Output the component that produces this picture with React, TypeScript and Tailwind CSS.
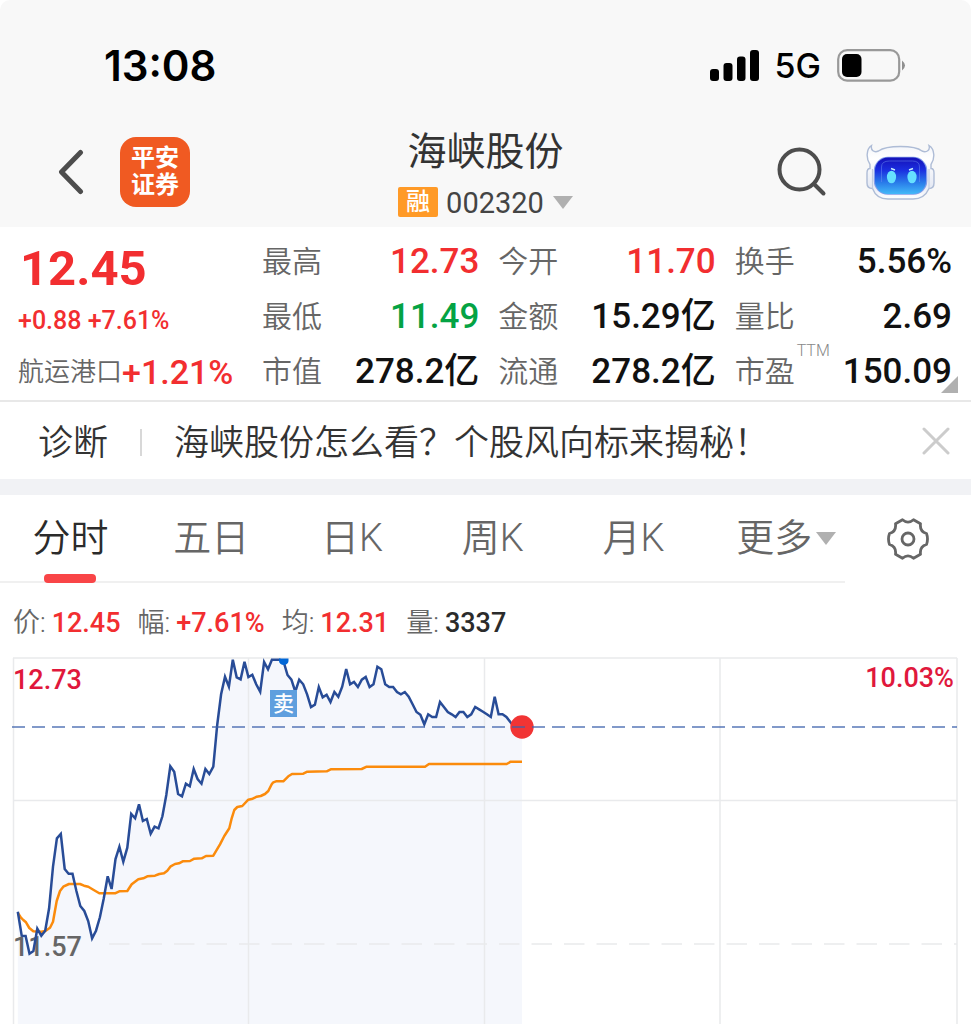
import React from 'react';

type Stat = {
  label: string;
  value: string;
  color: string;
  note?: string;
};

const stats: Stat[] = [
  { label: '最高', value: '12.73', color: 'text-[#f22e30]' },
  { label: '今开', value: '11.70', color: 'text-[#f22e30]' },
  { label: '换手', value: '5.56%', color: 'text-[#111111]' },
  { label: '最低', value: '11.49', color: 'text-[#04a344]' },
  { label: '金额', value: '15.29亿', color: 'text-[#111111]' },
  { label: '量比', value: '2.69', color: 'text-[#111111]' },
  { label: '市值', value: '278.2亿', color: 'text-[#111111]' },
  { label: '流通', value: '278.2亿', color: 'text-[#111111]' },
  { label: '市盈', value: '150.09', color: 'text-[#111111]', note: 'TTM' },
];

const tabs = ['分时', '五日', '日K', '周K', '月K', '更多'];

const summary = [
  { label: '价:', value: '12.45', color: 'text-[#f22e30]' },
  { label: '幅:', value: '+7.61%', color: 'text-[#f22e30]' },
  { label: '均:', value: '12.31', color: 'text-[#f22e30]' },
  { label: '量:', value: '3337', color: 'text-[#2b2b2b]' },
];

// One sample per minute, three units to a chart pixel
const prices = [
  800, 872, 873, 926, 918, 851, 872, 857, 790, 665, 580, 567, 672, 686, 686, 738, 783, 798, 828, 880,
  857, 817, 760, 694, 732, 642, 605, 650, 608, 507, 520, 478, 528, 522, 566, 545, 550, 514, 450, 364,
  380, 447, 454, 416, 424, 372, 402, 416, 372, 387, 365, 240, 148, 95, 125, 44, 97, 103, 50, 96,
  89, 118, 140, 51, 73, 44, 44, 44, 50, 90, 104, 140, 104, 118, 148, 186, 179, 126, 157, 149,
  171, 141, 155, 125, 72, 118, 111, 126, 104, 96, 126, 118, 65, 73, 118, 126, 126, 141, 148, 141,
  155, 178, 201, 209, 238, 208, 216, 216, 171, 186, 201, 208, 216, 201, 201, 216, 208, 186, 193, 200,
  208, 216, 155, 208, 208, 216, 231, 246, 246, 246,
];

const averages = [
  [54, 805], [62, 817], [70, 825], [78, 832], [88, 849], [100, 859], [124, 860], [136, 858], [150, 848],
  [159, 830], [170, 768], [180, 738], [190, 725], [207, 717], [240, 717], [252, 722], [265, 725], [280, 734],
  [298, 745], [345, 745], [358, 739], [382, 738], [395, 718], [415, 703], [430, 700], [442, 694], [465, 692],
  [478, 687], [492, 685], [502, 677], [512, 664], [525, 657], [537, 655], [548, 649], [570, 648], [583, 641],
  [605, 640], [618, 633], [640, 632], [660, 598], [673, 573], [688, 550], [695, 520], [703, 495], [712, 486],
  [727, 483], [745, 464], [758, 461], [770, 455], [782, 453], [795, 447], [805, 438], [815, 418], [820, 412],
  [828, 409], [850, 409], [865, 394], [876, 387], [910, 386], [922, 380], [980, 379], [992, 373], [1085, 372],
  [1100, 365], [1275, 365], [1287, 357], [1520, 357], [1532, 350], [1566, 350],
];

const pricePoints = prices.map((y, i) => `${(17.8 + i * 3.909).toFixed(1)},${(y / 3).toFixed(1)}`).join(' ');
const averagePoints = averages.map(([x, y]) => `${(x / 3).toFixed(1)},${(y / 3).toFixed(1)}`).join(' ');

const StatusBar = () => (
  <div className="flex h-[128px] items-center justify-between pl-[104px] pr-[65px] pt-[3px] font-['Inter',sans-serif] text-black">
    <span className="text-[42px] font-semibold leading-none">13:08</span>
    <div className="flex items-center">
      <svg className="h-[32px] w-[50px]" viewBox="0 0 50 32" aria-hidden="true">
        <rect x="0" y="19" width="9" height="12" rx="3" />
        <rect x="13.500" y="13" width="9" height="18" rx="3" />
        <rect x="27" y="6.500" width="8.500" height="24.500" rx="3" />
        <rect x="40" y="0" width="9" height="31" rx="3" />
      </svg>
      <span className="ml-[15px] text-[34px] font-medium leading-none">5G</span>
      <svg className="ml-[16px] h-[34px] w-[69px]" viewBox="0 0 69 34" aria-hidden="true">
        <rect x="1.200" y="1.200" width="61" height="30.500" rx="9" fill="none" stroke="#999" strokeWidth="2.200" />
        <rect x="5" y="5" width="19.500" height="23" rx="5" />
        <path d="M65 11.500q6 5 0 10z" fill="#8f8f8f" />
      </svg>
    </div>
  </div>
);

const Robot = () => (
  <svg className="h-[56px] w-[70px]" viewBox="0 0 70 56" aria-hidden="true">
    <defs>
      <linearGradient id="shell" x1="0" y1="0" x2="0" y2="1">
        <stop offset="0" stopColor="#f3f5fa" />
        <stop offset="0.25" stopColor="#ffffff" />
        <stop offset="0.75" stopColor="#e6eaf4" />
        <stop offset="1" stopColor="#ffffff" />
      </linearGradient>
      <linearGradient id="visor" x1="0" y1="0" x2="0" y2="1">
        <stop offset="0" stopColor="#1410b8" />
        <stop offset="0.35" stopColor="#1a2fe0" />
        <stop offset="0.7" stopColor="#2a7eea" />
        <stop offset="1" stopColor="#43b9f8" />
      </linearGradient>
    </defs>
    <path
      d="M6.500 1.500C5.500 6 9 9 13.500 7C19 3 27 2.500 35.500 2.500S52 3 57 7C61.500 9 65.500 6 64 1.500C70 5 70 15 66 20.500V24.500C68.500 24.500 69 26.500 69 29V39C69 42.500 67.500 44.500 64 44.500C60.500 52.500 55 55 48 55H23C16 55 10.500 52.500 7.500 44.500C4 44.500 2 42.500 2 39V29C2 26.500 2.500 24.500 5 24.500V20.500C1 15 1 5 6.500 1.500Z"
      fill="url(#shell)"
      stroke="#aebcd6"
      strokeWidth="1.400"
    />
    <path d="M7.500 25v19.500M64 25v19.500" fill="none" stroke="#c3cde0" strokeWidth="1.200" />
    <rect x="8.800" y="12.800" width="53.500" height="38" rx="14" fill="#7f9bea" />
    <rect x="10" y="13.500" width="51" height="36.500" rx="13" fill="url(#visor)" />
    <path d="M16.500 38V23q0-6 8-6h23q7 0 7 6v15" fill="none" stroke="#6c8df2" strokeWidth="1" opacity="0.5" />
    <ellipse cx="26.500" cy="33" rx="4.600" ry="6.300" fill="#66e0ff" />
    <ellipse cx="47" cy="33" rx="4.600" ry="6.300" fill="#66e0ff" />
    <path d="M26 24.500l4 1.500M44 26l4-1.500" stroke="#c7efff" strokeWidth="1.400" />
  </svg>
);

const NavBar = () => (
  <div className="grid h-[99px] grid-cols-[1fr_auto_1fr] items-start pl-[58px] pr-[36px]">
    <div className="flex h-[88px] items-center">
      <button type="button" aria-label="返回">
        <svg className="h-[46px] w-[26px]" viewBox="0 0 26 46" fill="none" stroke="#4d4d4d" strokeWidth="5" strokeLinecap="round" strokeLinejoin="round">
          <path d="M22.500 3.500L3.500 23l19 19.500" />
        </svg>
      </button>
      <a href="#" className="ml-[36px] flex h-[70px] w-[70px] flex-col items-center justify-center rounded-[16px] bg-[#f05a22] text-[24px] font-bold leading-[27px] text-white">
        <span>平安</span>
        <span>证券</span>
      </a>
    </div>
    <div className="-ml-[22px] flex flex-col items-center">
      <h1 className="text-[39px] font-normal leading-[48px] text-[#333333]">海峡股份</h1>
      <button type="button" className="mt-[8px] flex h-[36px] items-center">
        <span className="flex h-[30px] w-[40px] items-center justify-center rounded-[2px] bg-[#ff9a27] text-[24px] font-medium leading-none text-white">融</span>
        <span className="ml-2 pt-[2px] text-[29px] leading-none text-[#444444]">002320</span>
        <svg className="ml-[9px] h-[13px] w-[20px]" viewBox="0 0 20 13" fill="#b0b0b0" aria-hidden="true">
          <path d="M0 0h20L10 13z" />
        </svg>
      </button>
    </div>
    <div className="flex h-[88px] items-center justify-end gap-[38px]">
      <button type="button" aria-label="搜索">
        <svg className="h-[50px] w-[50px]" viewBox="0 0 50 50" fill="none" stroke="#4d4d4d" strokeWidth="4" strokeLinecap="round">
          <circle cx="22.500" cy="22.500" r="20" />
          <path d="M37 37l9.500 9.500" />
        </svg>
      </button>
      <button type="button" aria-label="智能助手">
        <Robot />
      </button>
    </div>
  </div>
);

const Quote = () => (
  <section className="relative flex h-[175px] border-b-2 border-[#e8e8e8] pl-[18px] pr-[19px] pt-[6px]">
    <div className="w-[244px] shrink-0 whitespace-nowrap text-[#f22e30]">
      <div className="pl-[2px] text-[49px] font-bold leading-[72px]">12.45</div>
      <div className="text-[25px] font-medium leading-[32px]">+0.88 +7.61%</div>
      <div className="flex items-center pt-[9px] leading-[52px]">
        <span className="text-[26px] font-[350] text-[#666666]">航运港口</span>
        <span className="text-[34px] font-medium">+1.21%</span>
      </div>
    </div>
    <dl className="grid flex-1 grid-cols-3 content-start gap-x-[19px] pt-px">
      {stats.map((stat) => (
        <div key={stat.label} className="relative flex h-[55px] items-center justify-between whitespace-nowrap">
          <dt className="text-[30px] font-[350] text-[#666666]">
            {stat.label}
            {stat.note && <span className="absolute -top-px left-[62px] text-[16px] leading-none text-[#888888]">{stat.note}</span>}
          </dt>
          <dd className={`text-[35px] font-medium leading-none ${stat.color}`}>{stat.value}</dd>
        </div>
      ))}
    </dl>
    <svg className="absolute bottom-[7px] right-[13px] h-[17px] w-[17px]" viewBox="0 0 17 17" fill="#b0b0b0" aria-hidden="true">
      <path d="M17 0v17H0z" />
    </svg>
  </section>
);

const Diagnosis = () => (
  <section className="flex h-[77px] items-center pl-[38px] pr-[21px] text-[35px] font-[350] text-[#333333]">
    <a href="#" className="pt-[8px]">诊断</a>
    <span className="ml-[32px] mt-1 h-[27px] w-[2px] bg-[#d8d8d8]" />
    <a href="#" className="ml-[32px] flex-1 whitespace-nowrap pt-[8px]">海峡股份怎么看？个股风向标来揭秘！</a>
    <button type="button" aria-label="关闭">
      <svg className="h-[28px] w-[28px]" viewBox="0 0 28 28" stroke="#cccccc" strokeWidth="3" strokeLinecap="round">
        <path d="M2 2l24 24M26 2L2 26" />
      </svg>
    </button>
  </section>
);

const Tabs = () => (
  <nav className="flex h-[88px]">
    <div className="flex w-[87%] border-b-2 border-[#f0f0f0]">
      {tabs.map((tab, i) => (
        <button
          key={tab}
          type="button"
          className={`relative flex w-1/6 items-center justify-center whitespace-nowrap text-[38px] font-[350] ${i === 0 ? 'text-[#2b2b2b]' : 'text-[#666666]'} ${tab === '更多' ? 'pl-6' : ''}`}
        >
          {tab}
          {tab === '更多' && (
            <svg className="ml-1 h-[13px] w-[20px]" viewBox="0 0 20 13" fill="#b0b0b0" aria-hidden="true">
              <path d="M0 0h20L10 13z" />
            </svg>
          )}
          {i === 0 && <span className="absolute -bottom-[2px] h-[9px] w-[52px] rounded-[4px] bg-[#f94547]" />}
        </button>
      ))}
    </div>
    <button type="button" aria-label="设置" className="flex flex-1 items-center justify-center">
      <svg className="h-[42px] w-[42px]" viewBox="0 0 42 42" fill="none" stroke="#666666" strokeWidth="2.800" strokeLinejoin="round">
        <path d="M15.500 1.800Q21 6.500 26.500 1.800L33.500 5.800Q32.500 13.500 39.500 15.500Q41.500 21 39.500 26.500Q32.500 28.500 33.500 36.200L26.500 40.200Q21 35.500 15.500 40.200L8.500 36.200Q9.500 28.500 2.500 26.500Q0.500 21 2.500 15.500Q9.500 13.500 8.500 5.800Z" />
        <circle cx="21" cy="21" r="6" />
      </svg>
    </button>
  </nav>
);

const Chart = () => (
  <svg className="block w-full" viewBox="0 0 971 379" role="img" aria-label="分时走势">
    <polygon points={`17.8,379 ${pricePoints} 522,379`} fill="#f5f7fc" />
    <g stroke="#e9eaec" strokeWidth="1.500" fill="none">
      <path d="M13 13H957M13 155.500H957M13.500 13V379M248.500 13V379M484.500 13V379M720 13V379M957 13V379" />
      <path d="M109 299H957" strokeDasharray="20.500 12" />
    </g>
    <g className="font-['Roboto',sans-serif] text-[27px] font-medium">
      <text x="13" y="44" fill="#e0183c">12.73</text>
      <text x="954" y="42" textAnchor="end" fill="#e0183c">10.03%</text>
      <text x="13" y="311" fill="#666666">11.57</text>
    </g>
    <polyline points={averagePoints} fill="none" stroke="#fb8b0c" strokeWidth="2.500" strokeLinejoin="round" />
    <polyline points={pricePoints} fill="none" stroke="#284c97" strokeWidth="2.500" strokeLinejoin="miter" />
    <path d="M279 13.500h9.500v2.500a4.750 4 0 0 1-9.500 0z" fill="#0066d6" />
    <rect x="270" y="45" width="27" height="27" fill="#5f9fde" />
    <text x="283.500" y="66" textAnchor="middle" fill="#ffffff" className="font-['Noto_Sans_CJK_SC',sans-serif] text-[21px] font-medium">卖</text>
    <circle cx="522" cy="82" r="11.700" fill="#f13434" />
    <path d="M12 82H957" stroke="#3d62ac" strokeWidth="1.700" strokeDasharray="13 7" opacity="0.85" />
  </svg>
);

export default function App() {
  return (
    <div className="overflow-hidden bg-white font-['Roboto','Noto_Sans_CJK_SC',sans-serif]">
      <header className="rounded-t-[10px] bg-[#f8f8f8]">
        <StatusBar />
        <NavBar />
      </header>
      <main>
        <Quote />
        <Diagnosis />
        <div className="h-4 bg-[#f1f2f5]" />
        <Tabs />
        <div className="flex h-[62px] items-center gap-[17px] whitespace-nowrap pl-[13px] pt-[18px]">
          {summary.map((item) => (
            <div key={item.label} className="flex items-center gap-[6px] leading-none">
              <span className="text-[27px] font-[350] text-[#666666]">{item.label}</span>
              <span className={`text-[27px] font-medium ${item.color}`}>{item.value}</span>
            </div>
          ))}
        </div>
        <Chart />
      </main>
    </div>
  );
}
